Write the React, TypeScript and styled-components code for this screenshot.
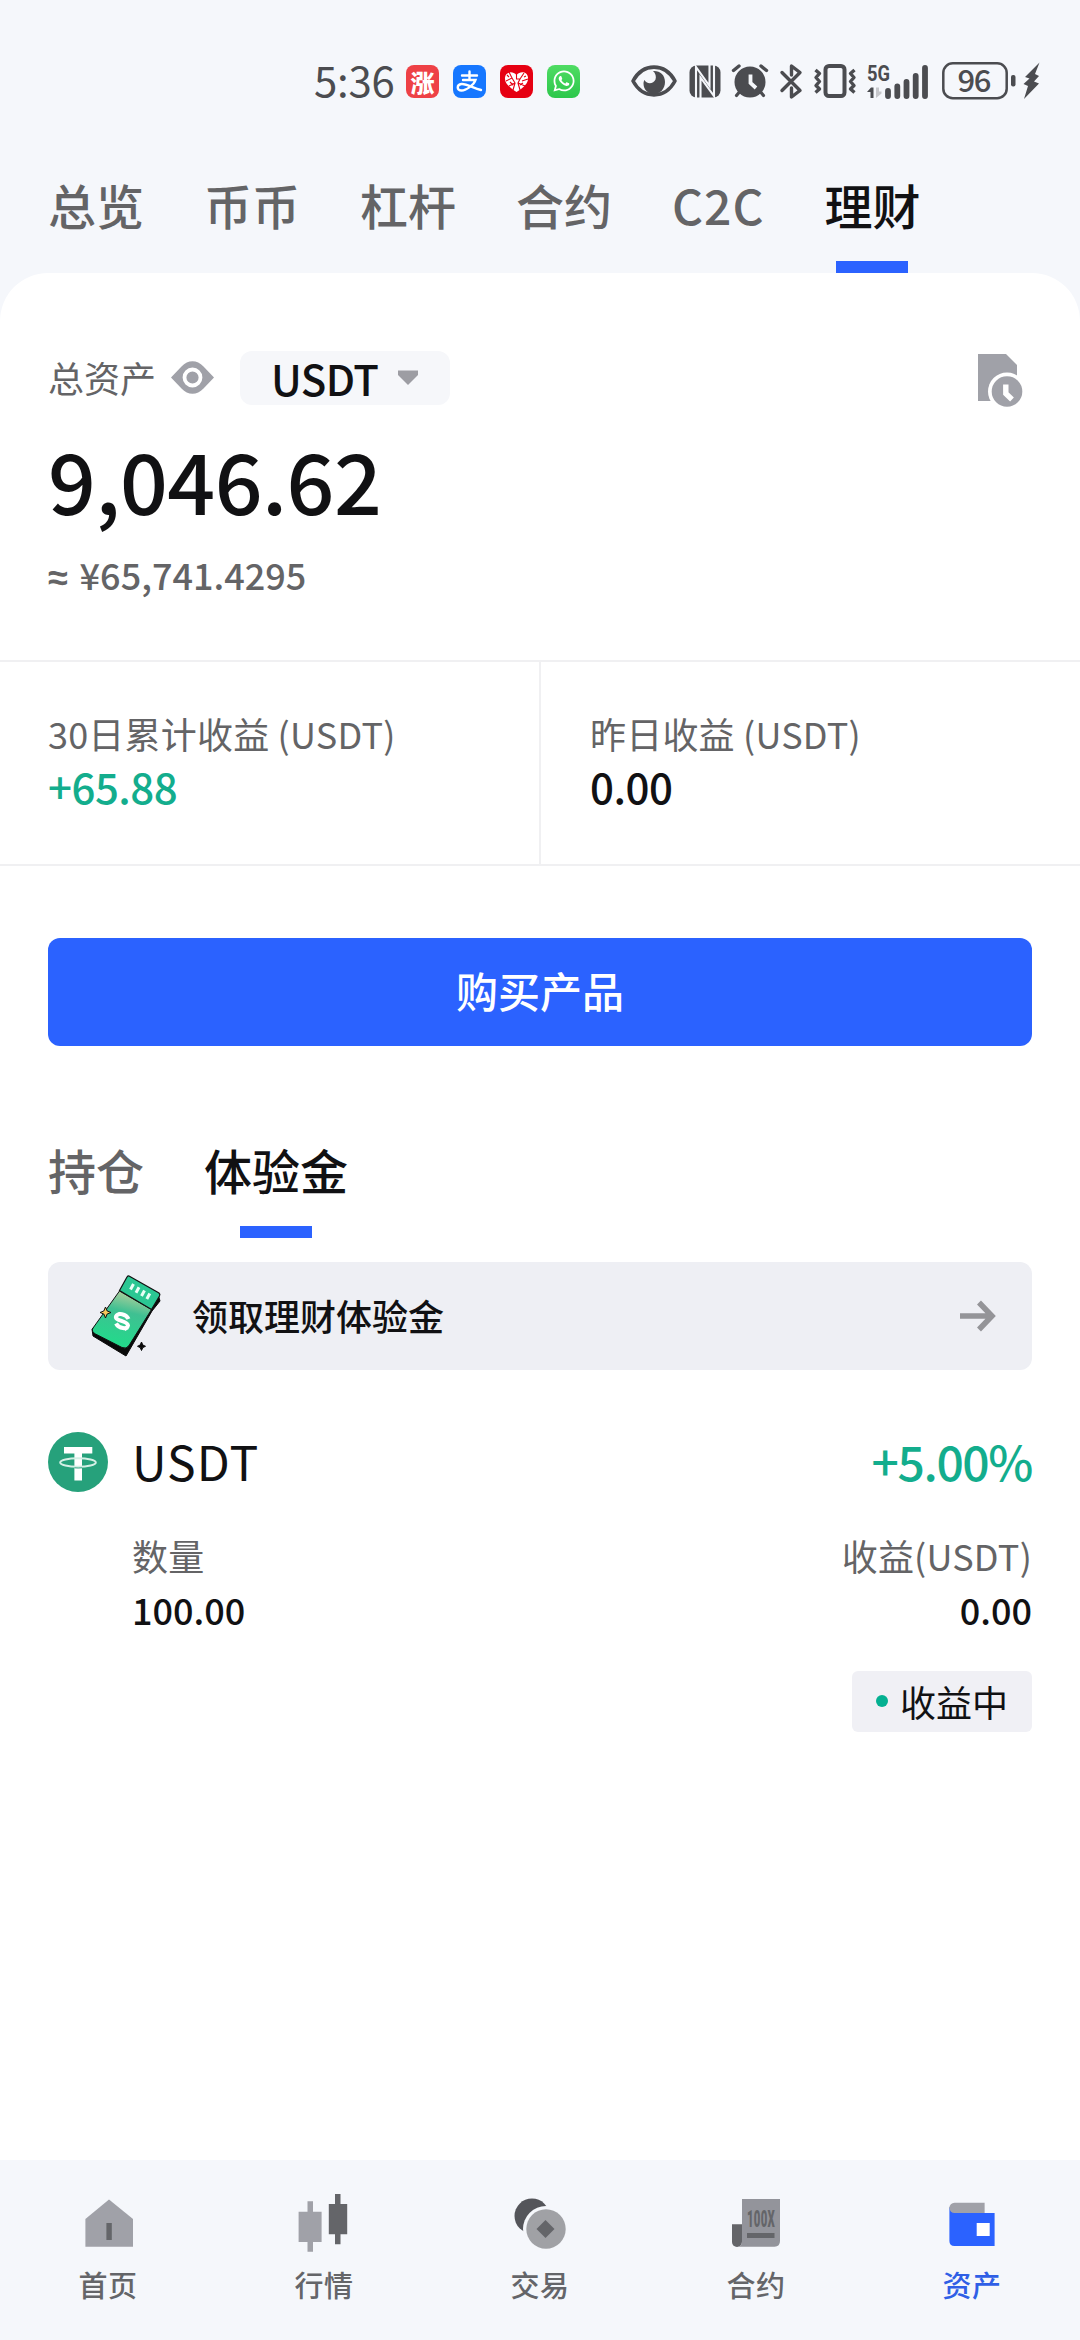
import React from 'react';
import styled, { createGlobalStyle } from 'styled-components';
import { FaWhatsapp } from 'react-icons/fa';

const ink = '#111113';
const muted = '#646466';
const grey = '#a0a1a8';
const dark = '#646569';
const status = '#4b4c50';
const blue = '#2b62ff';
const green = '#13ad8d';
const mist = '#f5f7fb';

const GlobalStyle = createGlobalStyle`
  * { box-sizing: border-box; }
  body {
    margin: 0;
    background: ${mist};
    font-family: "Noto Sans CJK SC", "Noto Sans", sans-serif;
    color: ${ink};
  }
  svg { display: block; flex: none; overflow: visible; }
`;

const Screen = styled.div`
  width: 1080px;
  height: 2340px;
  display: flex;
  flex-direction: column;
  background: ${mist};
  overflow: hidden;
  white-space: nowrap;
`;

/* ---------- status bar ---------- */

const StatusBar = styled.header`
  height: 110px;
  padding: 52px 40px 0 314px;
  display: flex;
  align-items: center;
  justify-content: space-between;
  color: ${status};
`;

const StatusGroup = styled.div<{ $gap: number }>`
  display: flex;
  align-items: center;
  gap: ${(p) => p.$gap}px;
`;

const Clock = styled.span`
  width: 78px;
  font-size: 42px;
  line-height: 52px;
  letter-spacing: -0.3px;
  padding-bottom: 5px;
`;

const AppBadge = styled.span<{ $bg: string }>`
  width: 33px;
  height: 33px;
  border-radius: 8px;
  background: ${(p) => p.$bg};
  color: #fff;
  display: flex;
  align-items: center;
  justify-content: center;
  font-size: 24px;
  font-weight: 900;
  line-height: 33px;
`;

/* ---------- tabs ---------- */

const TabBar = styled.nav<{ $top: number }>`
  display: flex;
  gap: 60px;
  padding: ${(p) => p.$top}px 48px 0;
`;

const TabItem = styled.div<{ $active?: boolean; $latin?: boolean }>`
  display: flex;
  flex-direction: column;
  align-items: center;
  gap: 25px;
  font-size: 48px;
  line-height: 64px;
  font-weight: 500;
  letter-spacing: ${(p) => (p.$latin ? '1px' : 'normal')};
  color: ${(p) => (p.$active ? ink : muted)};

  &::after {
    content: '';
    width: 72px;
    height: 12px;
    background: ${(p) => (p.$active ? blue : 'transparent')};
  }
`;

/* ---------- overview ---------- */

const Sheet = styled.main`
  flex: 1;
  background: #fff;
  border-radius: 48px 48px 0 0;
  padding-top: 78px;
  display: flex;
  flex-direction: column;
`;

const Summary = styled.section`
  padding: 0 48px;
`;

const SummaryHead = styled.div`
  height: 54px;
  display: flex;
  align-items: center;
`;

const SummaryLabel = styled.span`
  font-size: 36px;
  line-height: 50px;
  color: ${muted};
  padding-bottom: 3px;
  margin-right: 15px;
`;

const CurrencyPill = styled.button`
  width: 210px;
  height: 54px;
  margin: 0 auto 0 26px;
  padding: 0 32px 0 31px;
  border: 0;
  border-radius: 12px;
  background: #f6f7fa;
  display: flex;
  align-items: center;
  justify-content: space-between;
  font: 500 42px/54px "Noto Sans CJK SC", sans-serif;
  letter-spacing: -0.6px;
  color: ${ink};
`;

const Amount = styled.div`
  margin-top: 24px;
  font-size: 84px;
  line-height: 100px;
  font-weight: 500;
  letter-spacing: -0.5px;
`;

const Approx = styled.div`
  margin-top: 20px;
  font-size: 36px;
  line-height: 50px;
  font-weight: 500;
  color: ${muted};
`;

const ApproxSign = styled.span`
  display: inline-block;
  width: 23.5px;
  font-family: "Noto Sans", sans-serif;
  font-weight: 600;
  line-height: 40px;
`;

const Stats = styled.section`
  margin-top: 61px;
  height: 206px;
  border: solid #f0f0f2;
  border-width: 2px 0;
  display: grid;
  grid-template-columns: 541px 1fr;
`;

const Stat = styled.div`
  padding: 46px 48px 0;
  & + & { padding-left: 49px; }
  &:first-child { border-right: 2px solid #f0f0f2; }
`;

const StatLabel = styled.div`
  font-size: 36px;
  line-height: 50px;
  letter-spacing: 0.2px;
  color: ${muted};
`;

const StatValue = styled.div<{ $gain?: boolean }>`
  font-size: 42px;
  line-height: 56px;
  font-weight: 500;
  letter-spacing: -0.5px;
  color: ${(p) => (p.$gain ? green : ink)};
`;

const BuyButton = styled.button`
  height: 108px;
  margin: 72px 48px 0;
  padding: 0 0 4px;
  border: 0;
  border-radius: 12px;
  background: ${blue};
  color: #fff;
  font: 500 42px/60px "Noto Sans CJK SC", sans-serif;
`;

/* ---------- trial fund ---------- */

const Banner = styled.div`
  height: 108px;
  margin: 24px 48px 0;
  padding: 0 36px 0 40px;
  border-radius: 12px;
  background: #eeeff4;
  display: flex;
  align-items: center;
`;

const BannerText = styled.span`
  flex: 1;
  margin-left: 28px;
  padding-bottom: 3px;
  font-size: 36px;
  line-height: 50px;
  font-weight: 500;
`;

const Asset = styled.section`
  margin: 62px 48px 0;
`;

const AssetHead = styled.div`
  height: 60px;
  display: flex;
  align-items: center;
  gap: 24px;
  font-size: 48px;
  line-height: 60px;
`;

const AssetName = styled.span`
  flex: 1;
  padding-bottom: 4px;
  letter-spacing: 1px;
`;

const AssetRate = styled.span`
  padding-bottom: 4px;
  font-weight: 500;
  letter-spacing: -1.4px;
  color: ${green};
`;

const AssetBody = styled.div`
  margin-top: 38px;
  padding-left: 84px;
  display: flex;
  justify-content: space-between;
`;

const AssetCol = styled.div<{ $end?: boolean }>`
  display: flex;
  flex-direction: column;
  align-items: ${(p) => (p.$end ? 'flex-end' : 'flex-start')};
`;

const AssetValue = styled.div`
  margin-top: 5px;
  font-size: 36px;
  line-height: 48px;
  font-weight: 500;
`;

const StateTag = styled.div`
  width: 180px;
  height: 61px;
  margin-top: 38px;
  padding: 0 24px 2px;
  border-radius: 6px;
  background: #f0f0f5;
  display: flex;
  align-items: center;
  gap: 12px;
  font-size: 36px;
  line-height: 50px;

  &::before {
    content: '';
    width: 12px;
    height: 12px;
    border-radius: 50%;
    background: #04b091;
  }
`;

/* ---------- bottom navigation ---------- */

const BottomNav = styled.nav`
  height: 180px;
  padding-top: 32px;
  background: ${mist};
  display: grid;
  grid-template-columns: repeat(5, 1fr);
`;

const NavItem = styled.div<{ $active?: boolean }>`
  display: flex;
  flex-direction: column;
  align-items: center;
  gap: 12px;
  font-size: 29px;
  line-height: 40px;
  font-weight: 500;
  letter-spacing: 0.5px;
  color: ${(p) => (p.$active ? '#2f5fe6' : dark)};
`;

/* ---------- icons ---------- */

const AlipayIcon = () => (
  <svg width="33" height="33" viewBox="0 0 33 33" fill="none" stroke="#fff" strokeLinecap="round">
    <path d="M9 10.500H24M16.500 6.500V15M10 15H22.500C21 20 13 25.500 8.500 25.500C3.500 25.500 3.500 19.500 8.500 19C14 18.600 20 23 28 25" strokeWidth="2.400" />
  </svg>
);

const HeartIcon = () => (
  <svg width="33" height="33" viewBox="0 0 33 33">
    <path d="M16.500 27C8 21.500 4.500 17.500 5 12.500C5.500 7 12.500 5.500 16.500 10C20.500 5.500 27.500 7 28 12.500C28.500 17.500 25 21.500 16.500 27Z" fill="#fff" />
    <path d="M9 7L12 13L6 16M12 13L15 18L9 21M16.500 9V14H20L24 8M20 14L18 18L25 21M22 16L28 14M15 18L13 25M18 18L20 25M9 12L7 10M24 12L26 11M10 17L13 20M20 20L23 18" stroke="#e60012" strokeWidth="1.100" fill="none" />
  </svg>
);

const StatusEye = () => (
  <svg width="46" height="32" viewBox="0 0 46 32">
    <path d="M2 16C12 -2.500 34 -2.500 44 16C34 34.500 12 34.500 2 16Z" fill="none" stroke={status} strokeWidth="3.600" strokeLinejoin="round" />
    <path d="M22 6C29 5.500 34 10 34 17C34 24 29 29 23 29C17 29 12.500 24.500 12.500 18.500C12.500 17 13 15.500 13.500 15C15 19 22.500 19.500 24.500 14.500C25.500 11.500 24.500 8 22 6Z" fill={status} />
  </svg>
);

const NfcIcon = () => (
  <svg width="32" height="33" viewBox="0 0 32 33">
    <rect x="0.500" y="0.500" width="31" height="32" rx="7" fill={status} />
    <path d="M7 33V2L20.500 21V0" fill="none" stroke={mist} strokeWidth="2.100" />
    <path d="M11.500 33V12.500L25 31V0" fill="none" stroke={mist} strokeWidth="2.100" />
  </svg>
);

const AlarmIcon = () => (
  <svg width="36" height="34" viewBox="0 0 36 34" fill="none" stroke={status} strokeLinecap="round">
    <circle cx="18" cy="18" r="15.500" fill={status} stroke="none" />
    <path d="M1.500 6.500L7 2M34.500 6.500L29 2" strokeWidth="3.400" />
    <path d="M7 28.500L4.500 31.500M29 28.500L31.500 31.500" strokeWidth="3.200" />
    <path d="M18.500 10.500V19L24 24" stroke={mist} strokeWidth="3.800" strokeLinecap="butt" />
  </svg>
);

const BluetoothIcon = () => (
  <svg width="22" height="35" viewBox="0 0 22 35" fill="none" stroke={status} strokeWidth="3.400" strokeLinecap="round" strokeLinejoin="round">
    <path d="M2 8.500L20 26.500L11.500 33V24M11.500 11V2L20 8.500L2 26.500" />
  </svg>
);

const VibrateIcon = () => (
  <svg width="42" height="34" viewBox="0 0 42 34" fill="none" stroke={status}>
    <rect x="11.500" y="2" width="19" height="30" rx="3.500" strokeWidth="4" />
    <path d="M1.500 6L5.500 9.500L2 13.500L5.500 17.500L2 21.500L5.500 25L1.500 28.500M40.500 6L36.500 9.500L40 13.500L36.500 17.500L40 21.500L36.500 25L40.500 28.500" strokeWidth="3.400" strokeLinejoin="round" />
  </svg>
);

const SignalIcon = () => (
  <svg width="63" height="35" viewBox="0 0 63 35" fill={status}>
    <text x="0" y="17" fontFamily="Roboto, sans-serif" fontWeight="700" fontSize="22.500" textLength="23" lengthAdjust="spacingAndGlyphs">5G</text>
    <path d="M0 28L4 23.500H6.500V34H3.500V28Z" />
    <path d="M9 23.500V34L14.500 29.500V27.500H12V23.500Z" fill="#c6c7cb" />
    <path d="M21 27V32M30.300 22.500V32M39.500 18V32M48.700 12V32M58 4V32" fill="none" stroke={status} strokeWidth="5.800" strokeLinecap="round" />
  </svg>
);

const BatteryIcon = () => (
  <svg width="74" height="38" viewBox="0 0 74 38">
    <rect x="1.300" y="1.300" width="63.400" height="34.900" rx="9.500" fill="none" stroke={status} strokeWidth="2.500" />
    <rect x="69" y="13" width="4.500" height="11.500" rx="2" fill={status} />
    <text x="15.500" y="30" fontSize="31" fontWeight="500" fill={status} textLength="34">96</text>
  </svg>
);

const BoltIcon = () => (
  <svg width="17" height="38" viewBox="0 0 17 38">
    <path d="M16.500 0.500L2 15L6.500 16.500L0.500 22L5 24L1 37L16 21.500L11 19.500L16 14L12 12Z" fill={status} />
  </svg>
);

const EyeIcon = () => (
  <svg width="43" height="35" viewBox="0 0 43 35">
    <path d="M0 16.500L10.500 5.500C17 -1.500 26 -1.500 32.500 5.500L43 16.500L32.500 27.500C26 34.500 17 34.500 10.500 27.500Z" fill={grey} />
    <circle cx="21.500" cy="16.500" r="8" fill={grey} stroke="#fff" strokeWidth="3.800" />
  </svg>
);

const CaretIcon = () => (
  <svg width="20" height="19" viewBox="0 0 20 19">
    <path d="M0 1.500H20V6L10 16L0 6Z" fill="#9d9da3" />
  </svg>
);

const HistoryIcon = () => (
  <svg width="54" height="54" viewBox="0 0 54 54">
    <path d="M0 3H28L39 14V50H0Z" fill={grey} />
    <circle cx="29" cy="40.500" r="19" fill="#fff" />
    <circle cx="29" cy="40.500" r="15.300" fill={grey} />
    <path d="M27.800 33.500V42.500L34 48.500" fill="none" stroke="#fff" strokeWidth="5.400" />
  </svg>
);

const TicketIcon = () => (
  <svg width="76" height="90" viewBox="0 0 76 90">
    <defs>
      <linearGradient id="ticket" x1="0.600" y1="0" x2="0.350" y2="1">
        <stop offset="0" stopColor="#b5cf9c" />
        <stop offset="0.350" stopColor="#3fc092" />
        <stop offset="1" stopColor="#1fdd8a" />
      </linearGradient>
    </defs>
    <path d="M70 23L72 30L64 40L38 85L5 65L4 58L40 30Z" fill="#0a0a0a" stroke="#0a0a0a" strokeLinejoin="round" />
    <path d="M31.500 20L63.500 38.500L41 74.500Q38.500 78.500 34 76.500L7.500 63Q3 60.500 5 57Z" fill="url(#ticket)" stroke="#111" strokeWidth="1" />
    <path d="M41 5L71 22Q72.500 23.500 71.500 25L63.500 38.500L31.500 19.500L39 6Q40 4.500 41 5Z" fill="#2bc793" stroke="#111" strokeWidth="1.200" />
    <path d="M45.500 13L42.500 18.500M51 16.300L48 21.800M56.500 19.500L53.500 25M61.800 22.500L58.800 28" stroke="#e9fff6" strokeWidth="3" />
    <path d="M40.500 48C38 42.500 30 41.500 28 45.500C26.500 50 40 49.500 40 54.500C39.500 58.500 31 58 28 52.500M31 44L29.500 42M38 57L39 59" fill="none" stroke="#fff" strokeWidth="4" />
    <path d="M17.500 36L19.200 40L23 41.500L19.200 43L17.500 47L15.800 43L12 41.500L15.800 40Z" fill="#f5c65a" stroke="#111" strokeWidth="1" />
    <path d="M53.500 71L54.800 74L57.500 75.300L54.800 76.600L53.500 79.500L52.200 76.600L49.500 75.300L52.200 74Z" fill="#0a0a0a" stroke="#0a0a0a" />
  </svg>
);

const ArrowIcon = () => (
  <svg width="36" height="32" viewBox="0 0 36 32" fill="none" stroke="#949498" strokeWidth="5.500">
    <path d="M0 16H32M19 2.500L32 16L19 29.500" />
  </svg>
);

const TetherIcon = () => (
  <svg width="60" height="60" viewBox="0 0 60 60">
    <circle cx="30" cy="30" r="30" fill="#26a17b" />
    <path d="M16 15H44.300V21.500H34V48.500H26.400V21.500H16Z" fill="#fff" />
    <ellipse cx="30" cy="30.500" rx="17.800" ry="4.300" fill="none" stroke="#d4efe5" strokeWidth="2" />
    <path d="M26.400 35.800Q30 36.200 34 35.800" fill="none" stroke="#26a17b" strokeWidth="1" />
  </svg>
);

const HomeIcon = () => (
  <svg width="60" height="60" viewBox="0 0 60 60">
    <path d="M31 7.500L55 27V54.700H7.400V27Z" fill={grey} />
    <rect x="28.400" y="31" width="5.400" height="17" fill={dark} />
  </svg>
);

const MarketIcon = () => (
  <svg width="60" height="60" viewBox="0 0 60 60">
    <path d="M13.500 9.300H19V19.700H27.600V50H19V59.700H13.500V50H4.600V19.700H13.500Z" fill={grey} />
    <path d="M41 2H46.500V12H53.200V42.300H46.500V52.300H41V42.300H34.800V12H41Z" fill={dark} />
  </svg>
);

const TradeIcon = () => (
  <svg width="60" height="60" viewBox="0 0 60 60">
    <circle cx="22" cy="24" r="17.500" fill="#54555a" />
    <circle cx="36" cy="37" r="23" fill={mist} />
    <circle cx="36" cy="37" r="19.700" fill="#a0a1a5" />
    <path d="M35.500 28L44.500 37L35.500 46L26.500 37Z" fill={dark} />
  </svg>
);

const ContractIcon = () => (
  <svg width="60" height="60" viewBox="0 0 60 60">
    <path d="M6 32.300H16V50A5 5 0 0 1 6 50Z" fill={dark} />
    <path d="M16 7H54V49Q54 54.700 48.500 54.700H12Q16 54 16 49Z" fill="#93949b" />
    <text x="21" y="34.500" fontFamily="Roboto, sans-serif" fontSize="24" fontWeight="900" fill={dark} textLength="28" lengthAdjust="spacingAndGlyphs">100X</text>
    <rect x="21" y="41" width="27.500" height="5" fill={dark} />
  </svg>
);

const WalletIcon = () => (
  <svg width="60" height="60" viewBox="0 0 60 60">
    <path d="M7.400 15V49Q7.400 54 12.500 54H52.600V21H14Z" fill={blue} />
    <path d="M12.500 10.700H42.600V21H12.500A5.100 5.100 0 0 1 12.500 10.700Z" fill={grey} />
    <rect x="34.700" y="31" width="13" height="13" fill="#fff" />
  </svg>
);

const accountTabs = ['总览', '币币', '杠杆', '合约', 'C2C', '理财'];
const holdingTabs = ['持仓', '体验金'];
const navItems = [
  { label: '首页', Icon: HomeIcon },
  { label: '行情', Icon: MarketIcon },
  { label: '交易', Icon: TradeIcon },
  { label: '合约', Icon: ContractIcon },
  { label: '资产', Icon: WalletIcon },
];

export default function App() {
  return (
    <>
      <GlobalStyle />
      <Screen>
        <StatusBar>
          <StatusGroup $gap={14}>
            <Clock>5:36</Clock>
            <AppBadge $bg="#ee4146">涨</AppBadge>
            <AppBadge $bg="#1677ff"><AlipayIcon /></AppBadge>
            <AppBadge $bg="#e60012"><HeartIcon /></AppBadge>
            <AppBadge $bg="linear-gradient(#4fdc63, #2cc74b)"><FaWhatsapp size={24} /></AppBadge>
          </StatusGroup>
          <StatusGroup $gap={11.7}>
            <StatusEye />
            <NfcIcon />
            <AlarmIcon />
            <BluetoothIcon />
            <VibrateIcon />
            <SignalIcon />
            <StatusGroup $gap={7}>
              <BatteryIcon />
              <BoltIcon />
            </StatusGroup>
          </StatusGroup>
        </StatusBar>

        <TabBar $top={62}>
          {accountTabs.map((t) => (
            <TabItem key={t} $active={t === '理财'} $latin={t === 'C2C'}>{t}</TabItem>
          ))}
        </TabBar>

        <Sheet>
          <Summary>
            <SummaryHead>
              <SummaryLabel>总资产</SummaryLabel>
              <EyeIcon />
              <CurrencyPill>USDT<CaretIcon /></CurrencyPill>
              <HistoryIcon />
            </SummaryHead>
            <Amount>9,046.62</Amount>
            <Approx><ApproxSign>≈</ApproxSign> ¥65,741.4295</Approx>
          </Summary>

          <Stats>
            <Stat>
              <StatLabel>30日累计收益 (USDT)</StatLabel>
              <StatValue $gain>+65.88</StatValue>
            </Stat>
            <Stat>
              <StatLabel>昨日收益 (USDT)</StatLabel>
              <StatValue>0.00</StatValue>
            </Stat>
          </Stats>

          <BuyButton>购买产品</BuyButton>

          <TabBar $top={91}>
            {holdingTabs.map((t) => (
              <TabItem key={t} $active={t === '体验金'}>{t}</TabItem>
            ))}
          </TabBar>

          <Banner>
            <TicketIcon />
            <BannerText>领取理财体验金</BannerText>
            <ArrowIcon />
          </Banner>

          <Asset>
            <AssetHead>
              <TetherIcon />
              <AssetName>USDT</AssetName>
              <AssetRate>+5.00%</AssetRate>
            </AssetHead>
            <AssetBody>
              <AssetCol>
                <StatLabel>数量</StatLabel>
                <AssetValue>100.00</AssetValue>
              </AssetCol>
              <AssetCol $end>
                <StatLabel>收益(USDT)</StatLabel>
                <AssetValue>0.00</AssetValue>
                <StateTag>收益中</StateTag>
              </AssetCol>
            </AssetBody>
          </Asset>
        </Sheet>

        <BottomNav>
          {navItems.map(({ label, Icon }) => (
            <NavItem key={label} $active={label === '资产'}>
              <Icon />
              {label}
            </NavItem>
          ))}
        </BottomNav>
      </Screen>
    </>
  );
}
